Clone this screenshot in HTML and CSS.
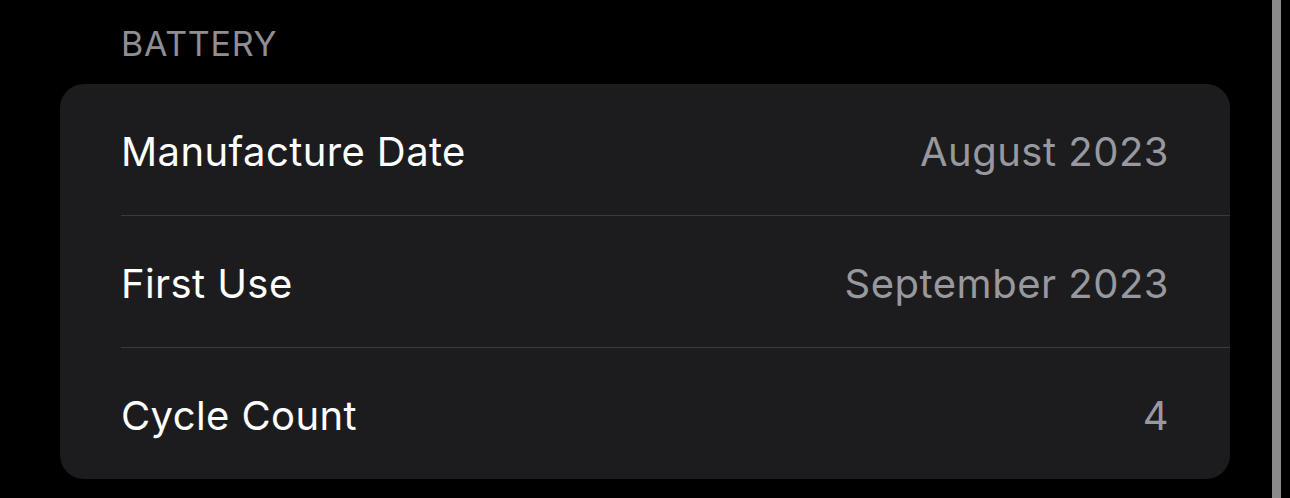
FILE: index.html
```html
<!DOCTYPE html>
<html>
<head>
<meta charset="utf-8">
<link rel="stylesheet" href="styles.css">
</head>
<body>
<div class="page">
  <div class="section-header">BATTERY</div>
  <div class="card">
    <div class="row">
      <span class="label">Manufacture Date</span>
      <span class="value">August 2023</span>
    </div>
    <div class="row">
      <span class="label">First Use</span>
      <span class="value">September 2023</span>
    </div>
    <div class="row">
      <span class="label">Cycle Count</span>
      <span class="value">4</span>
    </div>
  </div>
</div>
<div class="scrollbar"></div>
</body>
</html>
```
FILE: styles.css
```css
html, body {
  margin: 0;
  padding: 0;
  background: #000;
  height: 100%;
  overflow: hidden;
}
body {
  font-family: Inter, "Noto Sans", sans-serif;
  -webkit-font-smoothing: antialiased;
}
.page {
  padding: 0 60px;
  width: 1170px;
}
.section-header {
  color: #8e8e93;
  font-size: 34px;
  line-height: 40px;
  padding: 24px 0 20px 61px;
  letter-spacing: 0.7px;
}
.card {
  background: #1c1c1e;
  border-radius: 24px;
  overflow: hidden;
}
.row {
  height: 131px;
  margin-left: 61px;
  padding-top: 3px;
  padding-right: 61px;
  display: flex;
  align-items: center;
  justify-content: space-between;
  box-sizing: border-box;
}
.row + .row {
  border-top: 1px solid #3a3a3c;
  height: 132px;
}
.label {
  color: #fff;
  font-size: 40px;
  letter-spacing: 0.4px;
}
.value {
  color: #98989f;
  font-size: 40px;
  letter-spacing: 0.5px;
}
.scrollbar {
  position: absolute;
  top: 0;
  left: 1272px;
  width: 9px;
  height: 498px;
  background: #8a8a8a;
}
```
